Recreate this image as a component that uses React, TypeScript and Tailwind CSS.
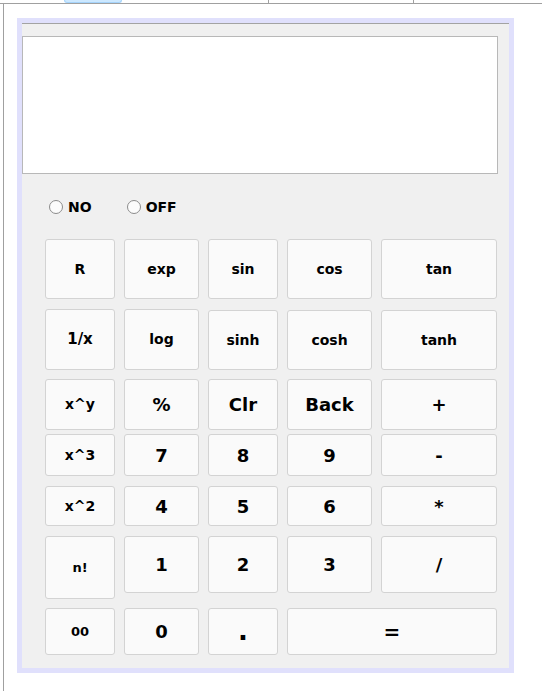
// Scientific calculator panel — table-style keypad inside a lavender frame

type Key = { label: string; cls: string };

const FONT = "font-['DejaVu_Sans','Verdana',sans-serif]";

const ROWS: { gap: string; keys: Key[] }[] = [
  {
    gap: "mt-0",
    keys: [
      { label: "R", cls: "h-[60px] text-[14px]" },
      { label: "exp", cls: "h-[60px] text-[14px]" },
      { label: "sin", cls: "h-[60px] text-[14px]" },
      { label: "cos", cls: "h-[60px] text-[14px]" },
      { label: "tan", cls: "h-[60px] text-[14px]" },
    ],
  },
  {
    gap: "mt-[10px]",
    keys: [
      { label: "1/x", cls: "h-[61px] text-[15px]" },
      { label: "log", cls: "h-[61px] text-[14px]" },
      { label: "sinh", cls: "mt-[1px] h-[60px] text-[14px]" },
      { label: "cosh", cls: "mt-[1px] h-[60px] text-[14px]" },
      { label: "tanh", cls: "mt-[1px] h-[60px] text-[14px]" },
    ],
  },
  {
    gap: "mt-[9px]",
    keys: [
      { label: "x^y", cls: "h-[51px] text-[14px]" },
      { label: "%", cls: "h-[51px] text-[18px]" },
      { label: "Clr", cls: "h-[51px] text-[18px]" },
      { label: "Back", cls: "h-[51px] text-[18px]" },
      { label: "+", cls: "h-[51px] text-[18px]" },
    ],
  },
  {
    gap: "mt-[4px]",
    keys: [
      { label: "x^3", cls: "h-[42px] text-[14px]" },
      { label: "7", cls: "h-[42px] text-[18px]" },
      { label: "8", cls: "h-[42px] text-[18px]" },
      { label: "9", cls: "h-[42px] text-[18px]" },
      { label: "-", cls: "h-[42px] text-[18px]" },
    ],
  },
  {
    gap: "mt-[10px]",
    keys: [
      { label: "x^2", cls: "h-[40px] text-[14px]" },
      { label: "4", cls: "h-[40px] text-[18px]" },
      { label: "5", cls: "h-[40px] text-[18px]" },
      { label: "6", cls: "h-[40px] text-[18px]" },
      { label: "*", cls: "h-[40px] text-[18px]" },
    ],
  },
  {
    gap: "mt-[10px]",
    keys: [
      { label: "n!", cls: "h-[63px] text-[13px]" },
      { label: "1", cls: "h-[57px] text-[18px]" },
      { label: "2", cls: "h-[57px] text-[18px]" },
      { label: "3", cls: "h-[57px] text-[18px]" },
      { label: "/", cls: "h-[57px] text-[18px]" },
    ],
  },
  {
    gap: "mt-[9px]",
    keys: [
      { label: "00", cls: "h-[47px] text-[13px]" },
      { label: "0", cls: "h-[47px] text-[18px]" },
      { label: ".", cls: "h-[47px] text-[26px]" },
      { label: "=", cls: "col-span-2 h-[47px] text-[20px]" },
    ],
  },
];

function Radio({ label }: { label: string }) {
  return (
    <label className="flex items-center gap-[5px]">
      <span className="block w-[14px] h-[14px] rounded-full border border-[#8c8c8c] bg-[#fcfcfc]" />
      <span className="text-[14px] font-bold text-black leading-none">{label}</span>
    </label>
  );
}

export default function App() {
  return (
    <div className={`w-[542px] h-[691px] bg-white overflow-hidden ${FONT}`}>
      {/* cropped frame strip at the top */}
      <div className="relative h-[4px] border-b border-[#a0a0a0]">
        <div className="absolute left-[64px] top-0 w-[58px] h-[3px] rounded-b-[3px] bg-[#cce8ff] border-x border-b border-[#a6d4fb]" />
        <div className="absolute left-[268px] top-0 w-px h-[3px] bg-[#a0a0a0]" />
        <div className="absolute left-[413px] top-0 w-px h-[3px] bg-[#a0a0a0]" />
      </div>

      <div className="ml-[3px] h-[687px] border-l border-[#a0a0a0] pl-[13px] pt-[14px]">
        <div className="w-[497px] border-[5px] border-[#e0e0fc]">
          <div className="bg-[#f0f0f0] border-t border-[#a3a3a3] pt-[12px] pb-[13px]">
            <textarea className="block w-[476px] h-[138px] bg-white border border-[#b8b8b8] resize-none outline-none" />

            <div className="flex items-center gap-[35px] pl-[27px] mt-[26px]">
              <Radio label="NO" />
              <Radio label="OFF" />
            </div>

            <div className="mt-[25px] pl-[23px] flex flex-col">
              {ROWS.map((row, i) => (
                <div key={i} className={`grid grid-cols-[70px_75px_70px_85px_116px] gap-x-[9px] items-start ${row.gap}`}>
                  {row.keys.map((k) => (
                    <button
                      key={k.label}
                      className={`flex items-center justify-center bg-[#fafafa] border border-[#d3d3d3] rounded-[3px] font-bold text-black ${k.cls}`}
                    >
                      {k.label}
                    </button>
                  ))}
                </div>
              ))}
            </div>
          </div>
        </div>
      </div>
    </div>
  );
}
